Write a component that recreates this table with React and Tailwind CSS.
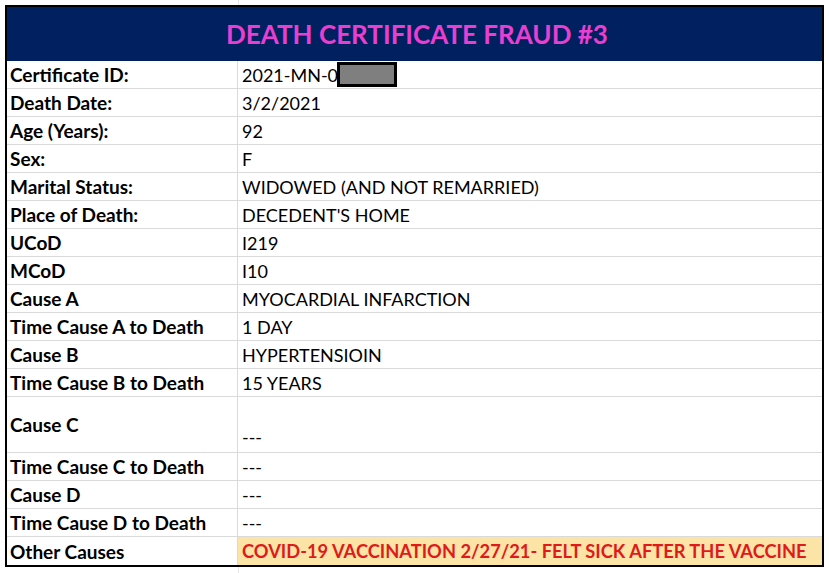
import React from "react";

const rows = [
  ["Certificate ID:", "2021-MN-0", "id"],
  ["Death Date:", "3/2/2021"],
  ["Age (Years):", "92"],
  ["Sex:", "F"],
  ["Marital Status:", "WIDOWED (AND NOT REMARRIED)"],
  ["Place of Death:", "DECEDENT'S HOME"],
  ["UCoD", "I219"],
  ["MCoD", "I10"],
  ["Cause A", "MYOCARDIAL INFARCTION"],
  ["Time Cause A to Death", "1 DAY"],
  ["Cause B", "HYPERTENSIOIN"],
  ["Time Cause B to Death", "15 YEARS"],
  ["Cause C", "---", "tall"],
  ["Time Cause C to Death", "---"],
  ["Cause D", "---"],
  ["Time Cause D to Death", "---"],
];

export default function App() {
  return (
    <div
      className="w-[829px] h-[573px] bg-white text-black overflow-hidden"
      style={{ fontFamily: "Lato, 'Liberation Sans', sans-serif" }}
    >
      <div className="h-[5px] ml-[238px] w-px bg-[#e6e6e6]" />
      <div className="ml-[5px] w-[819px] border-2 border-black">
        <div className="h-[54px] bg-[#002060] flex items-center justify-center">
          <span className="text-[#e83fd0] font-bold text-[26px] pt-[1px] pl-[5px]">
            DEATH CERTIFICATE FRAUD #3
          </span>
        </div>
        {rows.map(([label, value, kind], i) => (
          <div
            key={i}
            className={`flex border-b border-[#dadada] ${kind === "tall" ? "h-[56px]" : "h-[28px]"}`}
          >
            <div className="w-[231px] shrink-0 border-r border-[#dadada] flex items-center pl-[3px] font-bold text-[19px] leading-none whitespace-nowrap">
              {label}
            </div>
            <div
              className={`flex-1 flex pl-[4px] text-[18px] leading-none whitespace-nowrap ${kind === "tall" ? "items-end pb-[6px]" : "items-center"}`}
            >
              {kind === "id" ? (
                <span className="flex items-center">
                  <span className="w-[95px] overflow-visible">{value}</span>
                  <span className="w-[60px] h-[25px] bg-[#7f7f7f] border-[3px] border-black" />
                </span>
              ) : (
                value
              )}
            </div>
          </div>
        ))}
        <div className="flex h-[28px]">
          <div className="w-[231px] shrink-0 border-r border-[#dadada] flex items-center pl-[3px] font-bold text-[19px] leading-none">
            Other Causes
          </div>
          <div className="flex-1 flex items-center pl-[4px] bg-[#fce4a6] text-[#e01a1a] font-bold text-[18.3px] leading-none whitespace-nowrap">
            COVID-19 VACCINATION 2/27/21- FELT SICK AFTER THE VACCINE
          </div>
        </div>
      </div>
      <div className="h-[6px] ml-[238px] w-px bg-[#e6e6e6]" />
    </div>
  );
}
